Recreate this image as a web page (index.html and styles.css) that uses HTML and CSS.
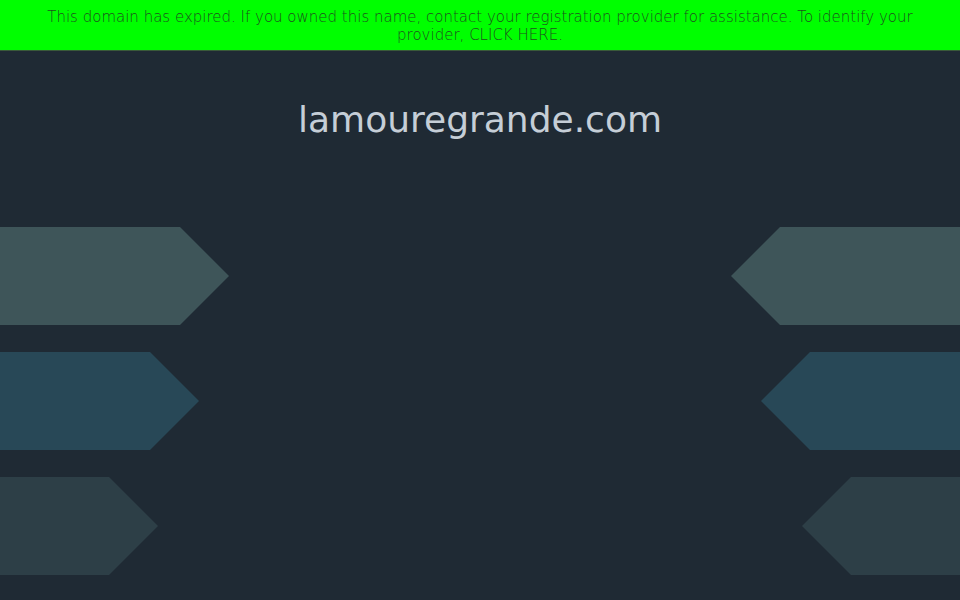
FILE: index.html
```html
<!DOCTYPE html>
<html lang="en">
<head>
<meta charset="utf-8">
<title>lamouregrande.com</title>
<link rel="stylesheet" href="styles.css">
</head>
<body>
<div class="banner">
  <p class="banner-text">This domain has expired. If you owned this name, contact your registration provider for assistance. To identify your provider, <a class="banner-link" href="#">CLICK HERE</a>.</p>
</div>
<h1 class="domain">lamouregrande.com</h1>
<div class="arrows">
  <div class="col col-left">
    <div class="arrow arrow-r a1 w1"></div>
    <div class="arrow arrow-r a2 w2"></div>
    <div class="arrow arrow-r a3 w3"></div>
  </div>
  <div class="col col-right">
    <div class="arrow arrow-l a1 w1"></div>
    <div class="arrow arrow-l a2 w2"></div>
    <div class="arrow arrow-l a3 w3"></div>
  </div>
</div>
</body>
</html>
```
FILE: styles.css
```css
html, body {
  margin: 0;
  padding: 0;
}
body {
  background: #1f2a34;
  font-family: "DejaVu Sans", sans-serif;
  height: 600px;
  overflow: hidden;
}
.banner {
  background: #00ff00;
  height: 51px;
  box-sizing: border-box;
  padding: 8px 0 0;
  border-bottom: 1px solid #3a5a3a;
}
.banner-text {
  margin: 0 auto;
  max-width: 900px;
  text-align: center;
  font-size: 15px;
  font-weight: 300;
  line-height: 18px;
  color: #1f4f1f;
}
.banner-link {
  color: inherit;
  text-decoration: none;
}
.domain {
  margin: 47px 0 0;
  text-align: center;
  font-weight: normal;
  font-size: 36px;
  line-height: 44px;
  color: #c5ced7;
}
.arrows {
  margin-top: 85px;
  display: flex;
  justify-content: space-between;
}
.col {
  display: flex;
  flex-direction: column;
  gap: 27px;
}
.col-right {
  align-items: flex-end;
}
.arrow {
  height: 98px;
  filter: drop-shadow(0 2px 3px rgba(0, 0, 0, 0.25));
}
.arrow-r {
  clip-path: polygon(0 0, calc(100% - 49px) 0, 100% 50%, calc(100% - 49px) 100%, 0 100%);
}
.arrow-l {
  clip-path: polygon(49px 0, 100% 0, 100% 100%, 49px 100%, 0 50%);
}
.w1 { width: 229px; }
.w2 { width: 199px; }
.w3 { width: 158px; }
.a1 { background: #3e5559; }
.a2 { background: #284857; }
.a3 { background: #2d3f47; }
```
